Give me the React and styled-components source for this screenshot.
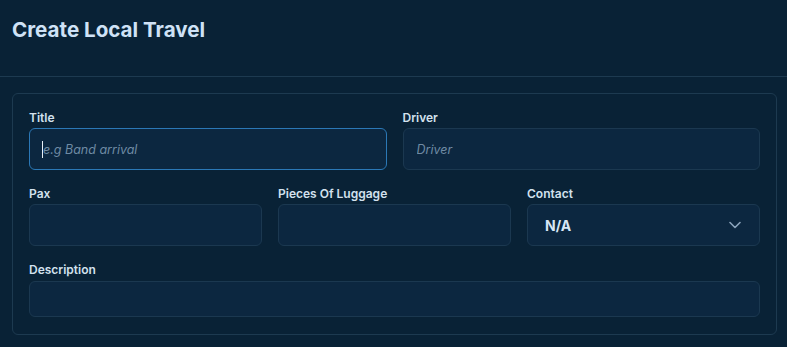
import React from 'react';
import styled, { createGlobalStyle } from 'styled-components';

const GlobalStyle = createGlobalStyle`
  html, body {
    margin: 0;
    padding: 0;
    background: #092236;
    font-family: Inter, "Noto Sans", sans-serif;
  }
  * {
    box-sizing: border-box;
  }
`;

const Page = styled.div`
  width: 787px;
  min-height: 347px;
  background: #092236;
`;

const Header = styled.header`
  height: 77px;
  padding: 17px 12px 0;
  border-bottom: 1px solid #1d3a50;
`;

const PageTitle = styled.h1`
  margin: 0;
  font-size: 20.6px;
  line-height: 26px;
  font-weight: 700;
  color: #cfe2f6;
`;

const Card = styled.form`
  margin: 16px 10px 0 12px;
  padding: 16px 16px 17px;
  border: 1px solid #1d3a50;
  border-radius: 6px;
  display: flex;
  flex-direction: column;
  gap: 16px;
`;

const Row = styled.div`
  display: grid;
  grid-template-columns: repeat(${(p) => p.$cols}, 1fr);
  gap: 16px;
`;

const Field = styled.label`
  display: flex;
  flex-direction: column;
`;

const Label = styled.span`
  font-size: 12px;
  line-height: 16px;
  font-weight: 600;
  color: #d3e1ee;
  margin-bottom: ${(p) => p.$gap || 2}px;
`;

const InputWrap = styled.div`
  position: relative;
`;

// fake text cursor shown in the focused field
const Caret = styled.span`
  position: absolute;
  left: 13px;
  top: 13px;
  width: 1px;
  height: 17px;
  background: #e6eef6;
  pointer-events: none;
`;

const Input = styled.input`
  display: block;
  height: ${(p) => p.$h || 42}px;
  width: 100%;
  padding: 0 12px 0 13px;
  background: #0c2740;
  border: 1px solid ${(p) => (p.$active ? '#2b78b6' : '#1b3850')};
  border-radius: 6px;
  color: #d7e6f5;
  font-family: inherit;
  font-size: 12.5px;
  outline: none;

  &::placeholder {
    color: #6f8ba4;
    font-style: italic;
  }
`;

const Select = styled.div`
  height: 42px;
  padding: 0 18px 0 17px;
  background: #0c2740;
  border: 1px solid #1b3850;
  border-radius: 6px;
  display: flex;
  align-items: center;
  justify-content: space-between;
  color: #d7e6f5;
  font-size: 14px;
  font-weight: 700;
`;

const Chevron = () => (
  <svg width="12" height="8" viewBox="0 0 12 8" fill="none">
    <path d="M1 1.5L6 6.5L11 1.5" stroke="#8aa3bb" strokeWidth="1.6" strokeLinecap="round" strokeLinejoin="round" />
  </svg>
);

export default function App() {
  return (
    <Page>
      <GlobalStyle />
      <Header>
        <PageTitle>Create Local Travel</PageTitle>
      </Header>
      <Card onSubmit={(e) => e.preventDefault()}>
        <Row $cols={2}>
          <Field>
            <Label>Title</Label>
            <InputWrap>
              <Input $active placeholder="e.g Band arrival" />
              <Caret />
            </InputWrap>
          </Field>
          <Field>
            <Label>Driver</Label>
            <Input placeholder="Driver" />
          </Field>
        </Row>
        <Row $cols={3}>
          <Field>
            <Label>Pax</Label>
            <Input />
          </Field>
          <Field>
            <Label>Pieces Of Luggage</Label>
            <Input />
          </Field>
          <Field>
            <Label>Contact</Label>
            <Select>
              N/A
              <Chevron />
            </Select>
          </Field>
        </Row>
        <Row $cols={1}>
          <Field>
            <Label $gap={3}>Description</Label>
            <Input $h={36} />
          </Field>
        </Row>
      </Card>
    </Page>
  );
}
